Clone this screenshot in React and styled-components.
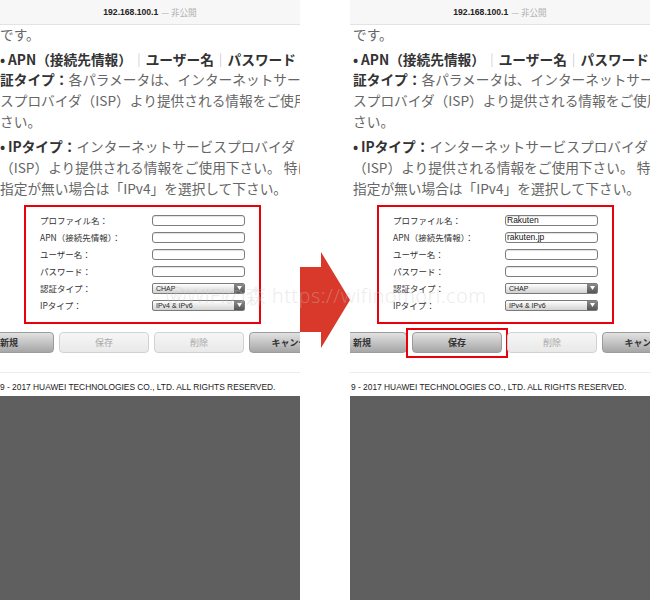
import React from 'react';
import styled, { createGlobalStyle } from 'styled-components';

const GlobalStyle = createGlobalStyle`
  body {
    margin: 0;
    background: #fff;
    font-family: "Noto Sans CJK JP", "Liberation Sans", sans-serif;
  }
`;

const Canvas = styled.div`
  position: relative;
  display: flex;
  width: 650px;
  height: 600px;
  overflow: hidden;
  background: #fff;
`;

const Panel = styled.div`
  display: flex;
  flex-direction: column;
  flex-shrink: 0;
  width: 300px;
  overflow: hidden;
`;

const Gutter = styled.div`
  display: flex;
  align-items: center;
  width: 50px;
  flex-shrink: 0;
`;

const AddressBar = styled.div`
  display: flex;
  align-items: center;
  justify-content: center;
  flex-shrink: 0;
  box-sizing: border-box;
  height: 25px;
  border-bottom: 1px solid #e3e3e3;
  background: #f7f7f7;
  font-family: "Liberation Sans", sans-serif;
  font-size: 8.6px;
  font-weight: 700;
  color: #222;
`;

const Private = styled.span`
  margin-left: 3px;
  font-family: "Noto Sans CJK JP", sans-serif;
  font-weight: 400;
  color: #b0b0b0;
`;

const Body = styled.div`
  flex-shrink: 0;
  padding-left: ${props => props.$shift}px;
`;

const Article = styled.div`
  margin-top: -1px;
  font-size: 13.7px;
  color: #666;
`;

const Paragraph = styled.div`
  margin-top: ${props => props.$gap}px;
`;

const Line = styled.div`
  height: 20.7px;
  line-height: 20.7px;
  white-space: nowrap;
`;

const Bullet = styled.span`
  display: inline-block;
  width: 8px;
  font-weight: 700;
  color: #333;
`;

const Strong = styled.b`
  font-weight: 700;
  color: #333;
`;

const Sep = styled.span`
  font-weight: 400;
  color: #bbb;
`;

const FormBox = styled.div`
  display: grid;
  grid-template-columns: 112px 93px;
  grid-auto-rows: 17px;
  align-items: center;
  box-sizing: border-box;
  width: 237px;
  margin: 6px 0 0 24px;
  padding: 5px 14px 8px;
  border: 2px solid #e8000b;
`;

const Label = styled.div`
  font-size: 8.5px;
  color: #333;
  white-space: nowrap;
`;

const Field = styled.input`
  box-sizing: border-box;
  width: 93px;
  height: 11px;
  margin: 0;
  padding: 0 1px;
  border: 1px solid #7d7d7d;
  border-radius: 3px;
  background: #fff;
  box-shadow: inset 0 1px 1px rgba(0, 0, 0, 0.12);
  font-family: "Liberation Sans", sans-serif;
  font-size: 8.5px;
  line-height: 9px;
  color: #111;
  outline: none;
`;

const Select = styled.div`
  display: flex;
  box-sizing: border-box;
  width: 93px;
  height: 11px;
  border: 1px solid #7a7a7a;
  border-radius: 2px;
  overflow: hidden;
  background: linear-gradient(#ffffff, #d2d2d2);
`;

const SelectText = styled.span`
  flex: 1;
  padding-left: 3px;
  font-family: "Liberation Sans", sans-serif;
  font-size: 7px;
  line-height: 9px;
  color: #222;
`;

const SelectArrow = styled.span`
  display: flex;
  align-items: center;
  justify-content: center;
  width: 10px;
  background: linear-gradient(#8a8a8a, #555);
`;

const ButtonRow = styled.div`
  display: flex;
  gap: 5px;
  margin: 8px 0 0 -36px;
`;

const Button = styled.div`
  position: relative;
  display: flex;
  align-items: center;
  justify-content: center;
  flex-shrink: 0;
  box-sizing: border-box;
  width: 90px;
  height: 21px;
  border: 1px solid ${props => (props.$disabled ? '#d2d2d2' : '#9c9c9c')};
  border-radius: 4px;
  background: ${props =>
    props.$disabled
      ? 'linear-gradient(#f6f6f6, #e9e9e9)'
      : 'linear-gradient(#e2e2e2, #a6a6a6)'};
  font-size: 9px;
  font-weight: ${props => (props.$disabled ? 400 : 700)};
  color: ${props => (props.$disabled ? '#a8a8a8' : '#333')};
  white-space: nowrap;

  &::after {
    content: '';
    display: ${props => (props.$highlight ? 'block' : 'none')};
    position: absolute;
    inset: -5px -7px -6px -7px;
    border: 2px solid #e8000b;
  }
`;

const Divider = styled.div`
  margin-top: 19px;
  border-top: 1px solid #ececec;
`;

const Copyright = styled.div`
  height: 23px;
  padding-top: 7px;
  box-sizing: border-box;
  font-family: "Liberation Sans", sans-serif;
  font-size: 8.4px;
  line-height: 14px;
  color: #222;
  white-space: nowrap;
  padding-left: ${props => props.$shift}px;
`;

const Dark = styled.div`
  flex: 1;
  background: #5f5f5f;
`;

const Watermark = styled.div`
  position: absolute;
  left: 166px;
  top: 282px;
  font-family: "Noto Sans", sans-serif;
  font-weight: 300;
  font-size: 20px;
  letter-spacing: 0.4px;
  color: rgba(200, 200, 200, 0.35);
  white-space: nowrap;
  pointer-events: none;
`;

const fields = [
  { label: 'プロファイル名：', kind: 'text', key: 'profile' },
  { label: 'APN（接続先情報）：', kind: 'text', key: 'apn' },
  { label: 'ユーザー名：', kind: 'text', key: 'user' },
  { label: 'パスワード：', kind: 'text', key: 'pass' },
  { label: '認証タイプ：', kind: 'select', value: 'CHAP' },
  { label: 'IPタイプ：', kind: 'select', value: 'IPv4 & IPv6' },
];

const Triangle = () => (
  <svg width="5" height="4" viewBox="0 0 5 4">
    <polygon points="0,0 5,0 2.5,4" fill="#fff" />
  </svg>
);

const Arrow = () => (
  <svg width="50" height="96" viewBox="0 0 50 96">
    <polygon points="0,15 21,15 21,0 50,48 21,96 21,80 0,80" fill="#d9392b" />
  </svg>
);

const Phone = ({ shift, values, saveEnabled }) => (
  <Panel>
    <AddressBar>
      192.168.100.1<Private>— 非公開</Private>
    </AddressBar>
    <Body $shift={shift}>
      <Article>
        <Line>です。</Line>
        <Paragraph $gap={4}>
          <Line>
            <Bullet>•</Bullet>
            <Strong>APN（接続先情報）</Strong>
            <Sep>｜</Sep>
            <Strong>ユーザー名</Strong>
            <Sep>｜</Sep>
            <Strong>パスワード</Strong>
            <Sep>｜</Sep>
            <Strong>認</Strong>
          </Line>
          <Line>
            <Strong>証タイプ：</Strong>各パラメータは、インターネットサー
          </Line>
          <Line>スプロバイダ（ISP）より提供される情報をご使用下</Line>
          <Line>さい。</Line>
        </Paragraph>
        <Paragraph $gap={5}>
          <Line>
            <Bullet>•</Bullet>
            <Strong>IPタイプ：</Strong>インターネットサービスプロバイダ
          </Line>
          <Line>（ISP）より提供される情報をご使用下さい。 特に</Line>
          <Line>指定が無い場合は「IPv4」を選択して下さい。</Line>
        </Paragraph>
      </Article>

      <FormBox>
        {fields.map(f => (
          <React.Fragment key={f.label}>
            <Label>{f.label}</Label>
            {f.kind === 'text' ? (
              <Field readOnly value={values[f.key] || ''} />
            ) : (
              <Select>
                <SelectText>{f.value}</SelectText>
                <SelectArrow>
                  <Triangle />
                </SelectArrow>
              </Select>
            )}
          </React.Fragment>
        ))}
      </FormBox>

      <ButtonRow>
        <Button>新規</Button>
        <Button $disabled={!saveEnabled} $highlight={saveEnabled}>
          保存
        </Button>
        <Button $disabled>削除</Button>
        <Button>キャンセル</Button>
      </ButtonRow>
    </Body>
    <Divider />
    <Copyright $shift={shift ? 1 : 0}>
      9 - 2017 HUAWEI TECHNOLOGIES CO., LTD. ALL RIGHTS RESERVED.
    </Copyright>
    <Dark />
  </Panel>
);

export default function App() {
  return (
    <>
      <GlobalStyle />
      <Canvas>
        <Phone shift={0} values={{}} saveEnabled={false} />
        <Gutter>
          <Arrow />
        </Gutter>
        <Phone
          shift={3}
          values={{ profile: 'Rakuten', apn: 'rakuten.jp' }}
          saveEnabled
        />
        <Watermark>ⓦWiFiの森 https://wifinomori.com</Watermark>
      </Canvas>
    </>
  );
}
